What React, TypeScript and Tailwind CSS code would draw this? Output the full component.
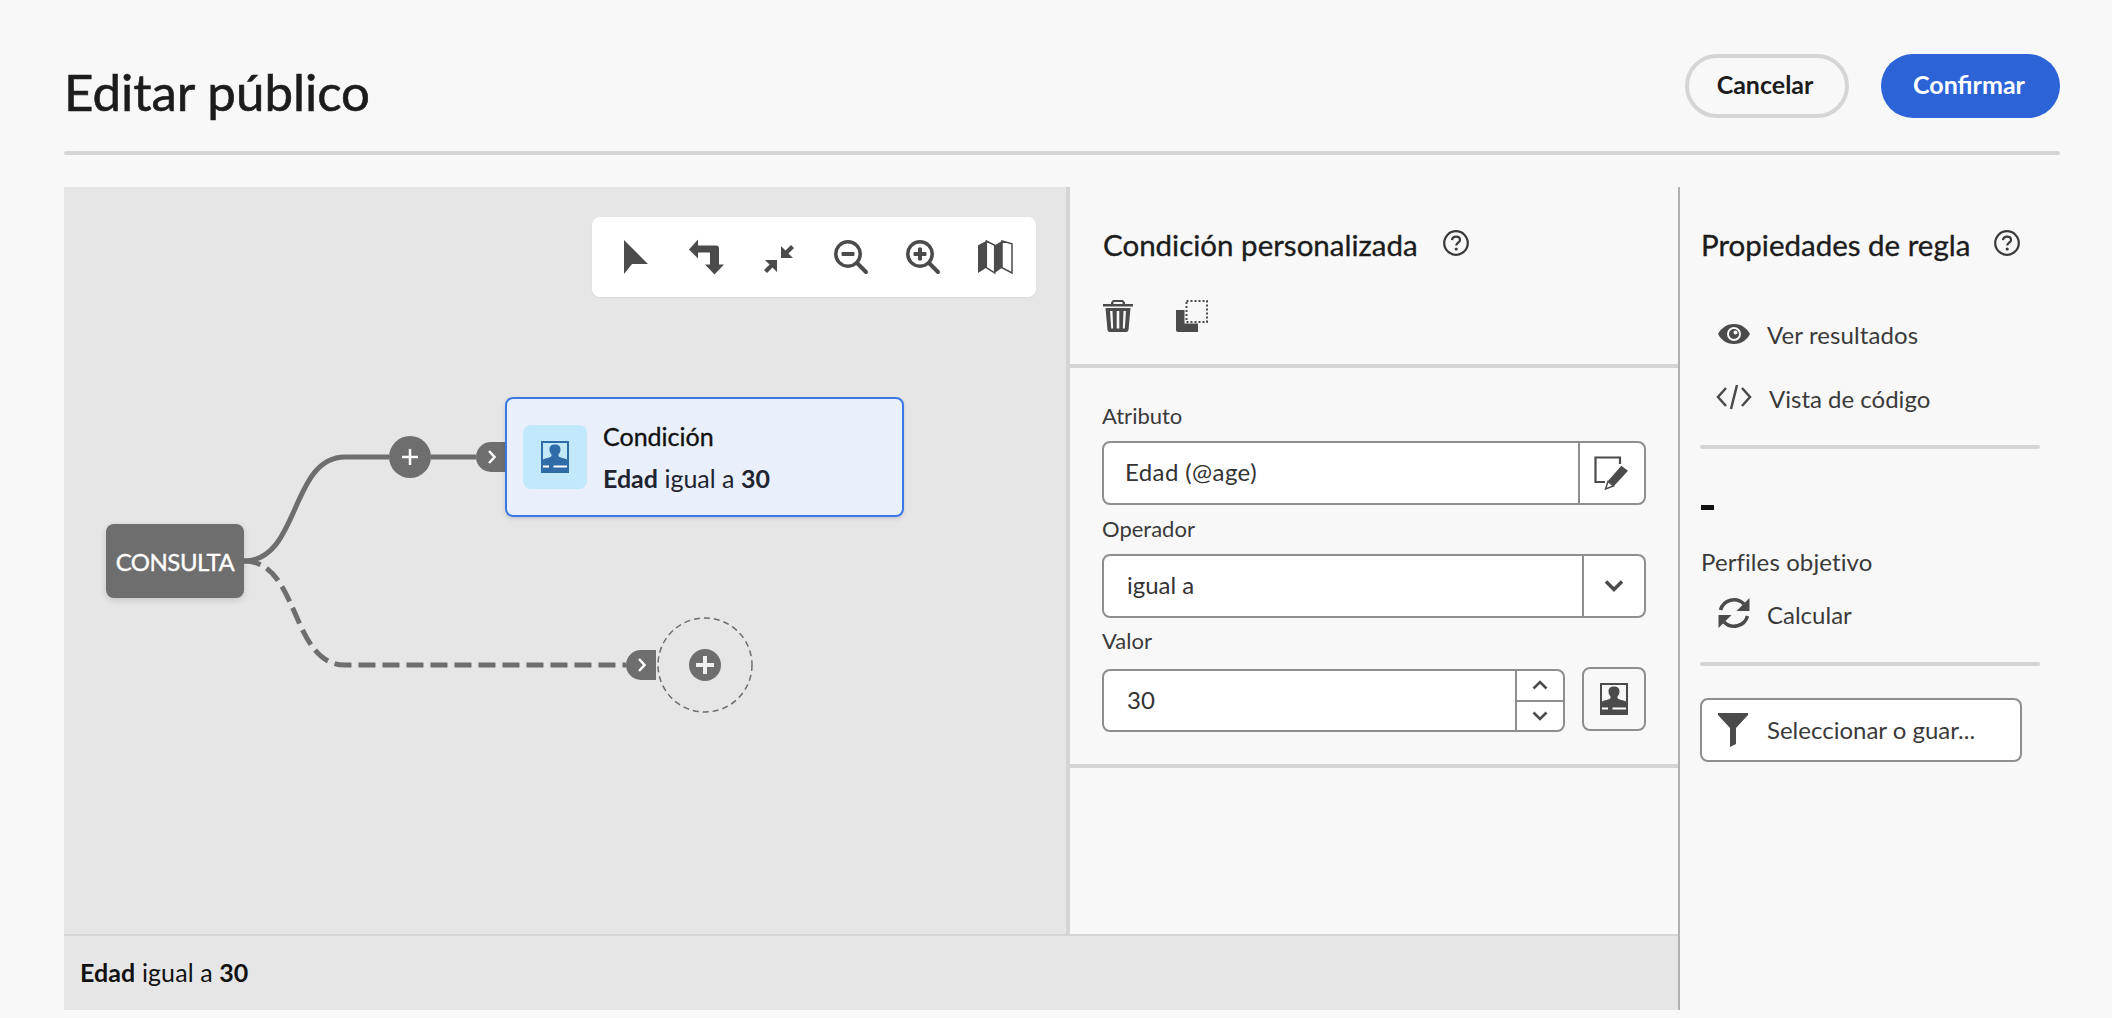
const font = "font-['Lato','Liberation_Sans',sans-serif]";
const medium = "[-webkit-text-stroke:0.35px]";

function Person({ color = "#4b4b4b", className = "" }: { color?: string; className?: string }) {
  return (
    <svg viewBox="0 0 28 32" className={className} fill={color}>
      <path fillRule="evenodd" d="M0 0H28V32H0ZM2 2V18.500C5 17 9 17 10.500 15V13.500C9 12 8.500 10 8.500 8.500 8.500 5 10.500 3.500 14 3.500S19.500 5 19.500 8.500C19.500 10 19 12 17.500 13.500V15C19 17 23 17 26 18.500V2Z" />
      <rect x="2" y="24.500" width="6" height="2" fill="#ffffff" />
      <rect x="12.500" y="24.500" width="13.500" height="2" fill="#ffffff" />
    </svg>
  );
}

function Help() {
  return (
    <svg viewBox="0 0 26 26" className="w-[26px] h-[26px]" fill="none">
      <circle cx="13" cy="13" r="11.800" stroke="#3a3a3a" strokeWidth="2.200" />
      <path d="M9 10.200C9.200 7.800 11 6.600 13 6.600c2.300 0 4 1.300 4 3.300 0 2.800-3.700 2.800-3.700 5.600" stroke="#3a3a3a" strokeWidth="2.200" />
      <circle cx="13.200" cy="19" r="1.600" fill="#3a3a3a" />
    </svg>
  );
}

function ToolIcon({ children }: { children: React.ReactNode }) {
  return (
    <svg viewBox="0 0 36 36" className="w-[36px] h-[36px]" fill="#4b4b4b">
      {children}
    </svg>
  );
}

function Toolbar() {
  return (
    <div className="absolute left-[528px] top-[30px] w-[444px] h-[80px] bg-white rounded-[8px] flex items-center pl-[25px] gap-[36px] shadow-[0_1px_2px_rgba(0,0,0,0.06)]">
      <ToolIcon>
        <path d="M7 1L31 25H15L7 35Z" />
      </ToolIcon>
      <ToolIcon>
        <path d="M0 10.500L9 .5V6.500H27A3 3 0 0 1 30 9.500V25.500H35L25.500 35.500L16 25.500H21V13.500H9V19.500Z" />
      </ToolIcon>
      <ToolIcon>
        <path d="M20 7V19H32L27.500 14.500L33 9L30 6L24.500 11.500ZM16 33V21H4L8.500 25.500L3 31L6 34L11.500 28.500Z" />
      </ToolIcon>
      <ToolIcon>
        <circle cx="15" cy="15" r="12.200" fill="none" stroke="#4b4b4b" strokeWidth="3.500" />
        <path d="M24 24L33 33" fill="none" stroke="#4b4b4b" strokeWidth="4" strokeLinecap="round" />
        <rect x="8.500" y="13" width="13" height="4" rx="1" />
      </ToolIcon>
      <ToolIcon>
        <circle cx="15" cy="15" r="12.200" fill="none" stroke="#4b4b4b" strokeWidth="3.500" />
        <path d="M24 24L33 33" fill="none" stroke="#4b4b4b" strokeWidth="4" strokeLinecap="round" />
        <rect x="8.500" y="13" width="13" height="4" rx="1" />
        <rect x="13" y="8.500" width="4" height="13" rx="1" />
      </ToolIcon>
      <ToolIcon>
        <path d="M1 6.300L9.300 2V28.700L1 34Z" />
        <path d="M17.700 6.300L25 2V28.700L17.700 34Z" />
        <path d="M9.300 2L17.700 6.300V34L9.300 28.700ZM25 2L35 4.700V34L25 28.700Z" fill="none" stroke="#4b4b4b" strokeWidth="1.500" />
      </ToolIcon>
    </div>
  );
}

function Canvas() {
  return (
    <div className="relative w-[1002px] h-[747px] bg-[#e6e6e6] shrink-0">
      <svg className="absolute inset-0 w-full h-full" viewBox="0 0 1002 747" fill="none">
        <path d="M180 374C236 374 226 270 281 270H325M367 270H412" stroke="#6e6e6e" strokeWidth="5" />
        <path d="M180 374C236 374 226 478 281 478H562" stroke="#6e6e6e" strokeWidth="5" strokeDasharray="17 7" />
        <circle cx="641" cy="478" r="47" stroke="#6e6e6e" strokeWidth="1.500" strokeDasharray="6 4" />
      </svg>

      <div className={`absolute left-[42px] top-[337px] w-[138px] h-[74px] bg-[#6e6e6e] rounded-[8px] flex items-center justify-center pt-[2px] text-white text-[24px] tracking-[-0.5px] ${medium} shadow-[0_2px_6px_rgba(0,0,0,0.15)]`}>
        CONSULTA
      </div>

      <div className="absolute left-[325px] top-[249px] w-[42px] h-[42px] rounded-full bg-[#6e6e6e] flex items-center justify-center">
        <svg viewBox="0 0 16 16" className="w-[16px] h-[16px]" stroke="#fff" strokeWidth="2.500"><path d="M8 0V16M0 8H16" /></svg>
      </div>

      <div className="absolute left-[412px] top-[255px] w-[30px] h-[30px] rounded-l-full bg-[#6e6e6e] flex items-center justify-center">
        <svg viewBox="0 0 8 14" className="w-[8px] h-[14px] ml-[2px]" fill="none" stroke="#fff" strokeWidth="2.500"><path d="M1 1L6.500 7L1 13" /></svg>
      </div>

      <div className="absolute left-[441px] top-[210px] w-[399px] h-[120px] bg-[#e9f0fb] border-2 border-[#3b78e7] rounded-[8px] flex items-center pl-[16px] shadow-[0_2px_4px_rgba(0,0,0,0.12)]">
        <div className="w-[64px] h-[64px] rounded-[8px] bg-[#c2e8fc] flex items-center justify-center shrink-0">
          <Person color="#2f6ca8" className="w-[28px] h-[32px]" />
        </div>
        <div className="ml-[16px] flex flex-col gap-[14px] text-[25px] leading-[28px] text-[#1f2430]">
          <div className={`text-[#111] ${medium}`}>Condición</div>
          <div><span className="font-bold">Edad</span> igual a <span className="font-bold">30</span></div>
        </div>
      </div>

      <div className="absolute left-[562px] top-[463px] w-[30px] h-[30px] rounded-l-full bg-[#6e6e6e] flex items-center justify-center">
        <svg viewBox="0 0 8 14" className="w-[8px] h-[14px] ml-[2px]" fill="none" stroke="#fff" strokeWidth="2.500"><path d="M1 1L6.500 7L1 13" /></svg>
      </div>

      <div className="absolute left-[625px] top-[462px] w-[32px] h-[32px] rounded-full bg-[#6e6e6e] flex items-center justify-center">
        <svg viewBox="0 0 18 18" className="w-[18px] h-[18px]" stroke="#f0f0f0" strokeWidth="4"><path d="M9 0V18M0 9H18" /></svg>
      </div>

      <Toolbar />
    </div>
  );
}

function ConditionPanel() {
  const label = "text-[22px] leading-[28px] text-[#3a3a3a]";
  const box = "border-2 border-[#8e8e8e] rounded-[8px] bg-white flex items-stretch text-[24px] text-[#333]";
  return (
    <div className="flex-1 flex flex-col min-w-0">
      <div className="h-[181px] pl-[33px] pt-[41px] border-b-4 border-[#d5d5d5] shrink-0">
        <div className="flex items-center h-[34px]">
          <span className={`text-[29.5px] text-[#1c1c1c] ${medium}`}>Condición personalizada</span>
          <span className="ml-[25px] -mt-[4px]"><Help /></span>
        </div>
        <div className="flex items-center gap-[42px] mt-[38px]">
          <svg viewBox="0 0 30 32" className="w-[30px] h-[32px]" fill="#4b4b4b">
            <path fillRule="evenodd" d="M10 0H20L22 2.500V4H30V6.500H0V4H8V2.500ZM10.500 2V4H19.500V2ZM2.500 8H27.500L25.500 30Q25.300 32 23 32H7Q4.700 32 4.500 30ZM7 11L8.200 28.500H10.200L9.500 11ZM13.700 11V28.500H16.300V11ZM20.500 11L19.800 28.500H21.800L23 11Z" />
          </svg>
          <svg viewBox="0 0 32 32" className="w-[32px] h-[32px] ml-[1px]">
            <path d="M0 10H8.500V23.500H22V32H2Q0 32 0 30Z" fill="#4b4b4b" />
            <rect x="10.500" y="1" width="20.500" height="21" fill="none" stroke="#4b4b4b" strokeWidth="2" strokeDasharray="2 2" />
          </svg>
        </div>
      </div>

      <div className="h-[400px] border-b-4 border-[#d5d5d5] pl-[32px] pr-[32px] pt-[34px] shrink-0">
        <div className={label}>Atributo</div>
        <div className={`${box} h-[64px] mt-[11px]`}>
          <div className="flex-1 pl-[21px] pb-[2px] flex items-center tracking-[0.4px]">Edad (@age)</div>
          <div className="w-[66px] border-l-2 border-[#8e8e8e] flex items-center justify-center">
            <svg viewBox="0 0 36 36" className="w-[36px] h-[36px]" fill="none">
              <path d="M11 27H1.500V2.500H26V9" stroke="#4b4b4b" strokeWidth="2.200" />
              <path d="M27.300 10.700L34 15.700L20 31L14 26Z" fill="#4b4b4b" />
              <path d="M14 26.500L19.500 31L11.500 34Z" fill="#fff" stroke="#4b4b4b" strokeWidth="1.500" />
            </svg>
          </div>
        </div>
        <div className={`${label} mt-[10px]`}>Operador</div>
        <div className={`${box} h-[64px] mt-[11px]`}>
          <div className="flex-1 pl-[23px] pb-[2px] flex items-center">igual a</div>
          <div className="w-[62px] border-l-2 border-[#8e8e8e] flex items-center justify-center">
            <svg viewBox="0 0 20 14" className="w-[20px] h-[14px]" fill="none" stroke="#4b4b4b" strokeWidth="3.500"><path d="M2 2.500L10 10.500L18 2.500" /></svg>
          </div>
        </div>
        <div className={`${label} mt-[9px]`}>Valor</div>
        <div className="flex items-start mt-[12px]">
          <div className={`${box} h-[63px] w-[463px] mt-[2px]`}>
            <div className="flex-1 pl-[23px] pb-[2px] flex items-center">30</div>
            <div className="w-[48px] border-l-2 border-[#8e8e8e] flex flex-col">
              <div className="flex-1 border-b-2 border-[#8e8e8e] flex items-center justify-center">
                <svg viewBox="0 0 16 10" className="w-[16px] h-[10px]" fill="none" stroke="#4b4b4b" strokeWidth="2.500"><path d="M1.500 8.500L8 2L14.500 8.500" /></svg>
              </div>
              <div className="flex-1 flex items-center justify-center">
                <svg viewBox="0 0 16 10" className="w-[16px] h-[10px]" fill="none" stroke="#4b4b4b" strokeWidth="2.500"><path d="M1.500 1.500L8 8L14.500 1.500" /></svg>
              </div>
            </div>
          </div>
          <div className="ml-[17px] w-[64px] h-[64px] border-2 border-[#8e8e8e] rounded-[8px] flex items-center justify-center">
            <Person className="w-[28px] h-[32px]" />
          </div>
        </div>
      </div>
      <div className="flex-1" />
    </div>
  );
}

function PropsPanel() {
  const rule = "w-[340px] h-[4px] rounded-full bg-[#d5d5d5]";
  const item = "text-[24px] leading-[32px] text-[#3a3a3a]";
  return (
    <div className="w-[382px] border-l-2 border-[#b1b1b1] pl-[20px] flex flex-col shrink-0">
      <div className="flex items-center h-[34px] mt-[41px] pl-[1px]">
        <span className={`text-[29.5px] text-[#1c1c1c] ${medium}`}>Propiedades de regla</span>
        <span className="ml-[24px] -mt-[4px]"><Help /></span>
      </div>
      <div className={`flex items-center h-[32px] mt-[57px] pl-[18px] ${item}`}>
        <svg viewBox="0 0 32 20" className="w-[32px] h-[20px] -mt-[3px]" fill="#4b4b4b">
          <path fillRule="evenodd" d="M16 0C24 0 29.500 5 32 10C29.500 15 24 20 16 20S2.500 15 0 10C2.500 5 8 0 16 0ZM16 3A7 7 0 1 0 16 17A7 7 0 1 0 16 3Z" />
          <path fillRule="evenodd" d="M16 5A5 5 0 1 0 16 15A5 5 0 1 0 16 5ZM17.500 6.500A2 2 0 1 1 17.500 10.500A2 2 0 1 1 17.500 6.500Z" />
        </svg>
        <span className="ml-[17px] tracking-[0.1px]">Ver resultados</span>
      </div>
      <div className={`flex items-center h-[32px] mt-[32px] pl-[16px] ${item}`}>
        <svg viewBox="0 0 36 26" className="w-[36px] h-[26px] -mt-[4px]" fill="none" stroke="#4b4b4b" strokeWidth="2.500">
          <path d="M10 4L2 13L10 22M26 4L34 13L26 22M21 1L15 25" />
        </svg>
        <span className="ml-[17px]">Vista de código</span>
      </div>
      <div className={`${rule} mt-[30px]`} />
      <div className="w-[13px] h-[5px] bg-[#111] mt-[56px] ml-[1px]" />
      <div className="text-[24px] leading-[28px] text-[#3a3a3a] mt-[38px] tracking-[0.1px] pl-[1px]">Perfiles objetivo</div>
      <div className={`flex items-center h-[32px] mt-[22px] pl-[18px] ${item}`}>
        <svg viewBox="0 0 32 32" className="w-[32px] h-[32px] -mt-[2px]" fill="none">
          <path d="M2.500 13A14 14 0 0 1 26 7" stroke="#4b4b4b" strokeWidth="3.500" />
          <path d="M31.500 1V14H18.500Z" fill="#4b4b4b" />
          <path d="M29.500 19A14 14 0 0 1 6 25" stroke="#4b4b4b" strokeWidth="3.500" />
          <path d="M.5 31V18H13.500Z" fill="#4b4b4b" />
        </svg>
        <span className="ml-[17px] relative top-[1px]">Calcular</span>
      </div>
      <div className={`${rule} mt-[32px]`} />
      <div className="mt-[32px] w-[322px] h-[64px] border-2 border-[#8e8e8e] rounded-[8px] bg-white flex items-center pl-[16px] text-[24px] text-[#3a3a3a]">
        <svg viewBox="0 0 30 34" className="w-[30px] h-[34px]" fill="#4b4b4b">
          <path d="M0 0H30V2L18 15V31L12 34V15L0 2Z" />
        </svg>
        <span className="ml-[19px]">Seleccionar o guar...</span>
      </div>
    </div>
  );
}

export default function App() {
  return (
    <div className={`w-[2112px] h-[1018px] bg-[#f8f8f8] overflow-hidden pl-[64px] pr-[52px] ${font}`}>
      <header className="h-[151px] flex items-start justify-between">
        <h1 className={`text-[51px] leading-[60px] mt-[62px] text-[#1c1c1c] [-webkit-text-stroke:0.6px]`}>Editar público</h1>
        <div className="flex gap-[32px] mt-[54px]">
          <button className="w-[164px] h-[64px] rounded-full border-4 border-[#d5d5d5] pr-[4px] pb-[2px] text-[25px] font-bold text-[#1c1c1c]">Cancelar</button>
          <button className="w-[179px] h-[64px] rounded-full bg-[#2c64d8] pr-[3px] pb-[2px] text-[25px] font-bold text-white">Confirmar</button>
        </div>
      </header>
      <div className="h-[4px] rounded-full bg-[#d5d5d5]" />
      <main className="flex mt-[32px] h-[823px]">
        <div className="w-[1614px] flex flex-col shrink-0">
          <div className="flex h-[747px]">
            <Canvas />
            <div className="w-[4px] bg-[#d5d5d5] shrink-0" />
            <ConditionPanel />
          </div>
          <div className="h-[76px] border-t-2 border-[#d5d5d5] bg-[#e6e6e6] pl-[16px] flex items-center text-[25px] tracking-[0.1px] text-[#111]">
            <span><b>Edad</b> igual a <b>30</b></span>
          </div>
        </div>
        <PropsPanel />
      </main>
    </div>
  );
}
